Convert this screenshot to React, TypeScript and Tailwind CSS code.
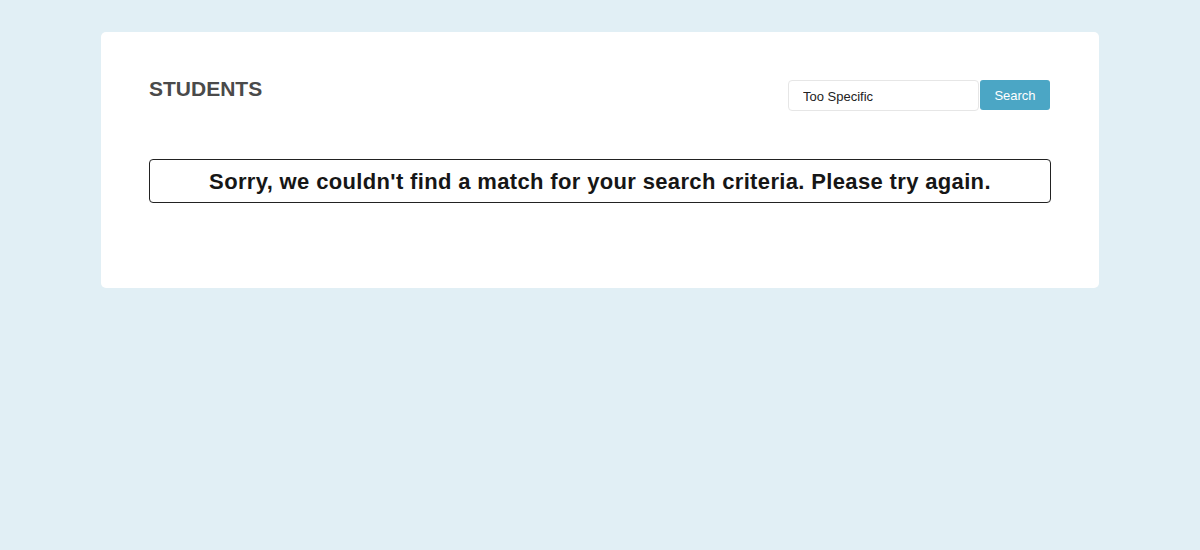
import React from "react";

export default function App() {
  return (
    <div className="min-h-[550px] w-full bg-[#e1eff5] pt-8" style={{ fontFamily: '"Liberation Sans", Arial, sans-serif' }}>
      <div className="mx-auto w-[998px] rounded-[5px] bg-white px-12 pt-12 pb-[85px]">
        <div className="flex items-start justify-between h-[31px]">
          <h2 className="text-[21px] leading-[21px] font-bold text-[#4a4a4a] -mt-[2px]">STUDENTS</h2>
          <div className="flex items-start gap-[1px] pr-[1px]">
            <input
              defaultValue="Too Specific"
              className="h-[31px] w-[191px] rounded-[4px] border border-[#e6e6e6] bg-white pl-[14px] pt-[1px] text-[13px] text-[#222] outline-none"
            />
            <button className="h-[30px] w-[70px] rounded-[3px] bg-[#4ba6c5] pt-[1px] text-[13px] text-white">Search</button>
          </div>
        </div>
        <div className="mt-[48px] flex h-[44px] items-center justify-center rounded-[4px] border border-[#222]">
          <p className="text-[22px] font-bold tracking-[0.35px] text-[#161616]">
            Sorry, we couldn't find a match for your search criteria. Please try again.
          </p>
        </div>
      </div>
    </div>
  );
}
